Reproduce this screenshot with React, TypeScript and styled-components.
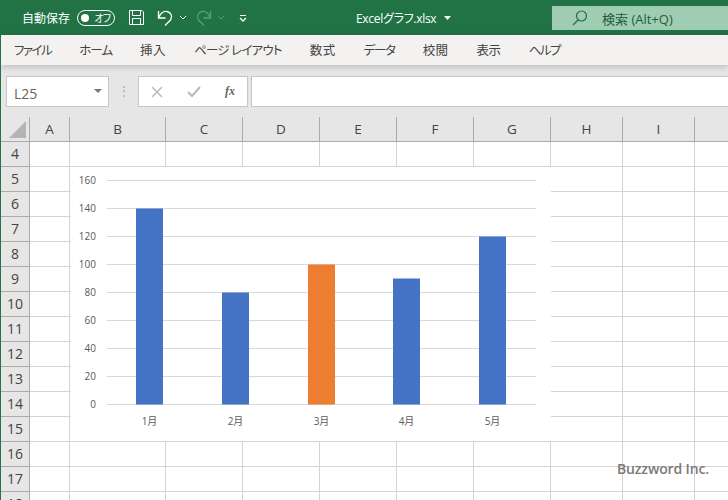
import styled, { createGlobalStyle } from 'styled-components';

const UI_FONT = `'Open Sans', 'Noto Sans CJK JP', sans-serif`;

const COLUMNS = [
  { name: 'A', width: 40 },
  { name: 'B', width: 96 },
  { name: 'C', width: 77 },
  { name: 'D', width: 77 },
  { name: 'E', width: 77 },
  { name: 'F', width: 77 },
  { name: 'G', width: 77 },
  { name: 'H', width: 72 },
  { name: 'I', width: 72 },
  { name: '', width: 40 },
];
const ROWS = [4, 5, 6, 7, 8, 9, 10, 11, 12, 13, 14, 15, 16, 17, 18];
const MENU = [
  { label: 'ファイル', track: -1.5 },
  { label: 'ホーム', track: -1 },
  { label: '挿入', track: 0.5 },
  { label: 'ページ レイアウト', track: -0.8 },
  { label: '数式', track: 0.5 },
  { label: 'データ', track: -1.3 },
  { label: '校閲', track: 0.3 },
  { label: '表示', track: -0.4 },
  { label: 'ヘルプ', track: -1.5 },
];
const SALES = [
  { label: '1月', value: 140, x: 65, color: '#4472c4' },
  { label: '2月', value: 80, x: 151, color: '#4472c4' },
  { label: '3月', value: 100, x: 237, color: '#ed7d31' },
  { label: '4月', value: 90, x: 322, color: '#4472c4' },
  { label: '5月', value: 120, x: 408, color: '#4472c4' },
];
const TICKS = [160, 140, 120, 100, 80, 60, 40, 20, 0];

const GlobalStyle = createGlobalStyle`
  html, body {
    margin: 0;
    padding: 0;
    background: #fff;
  }
`;

const Window = styled.div`
  position: relative;
  width: 728px;
  height: 500px;
  overflow: hidden;
  box-sizing: border-box;
  border-left: 1px solid #217346;
  font-family: ${UI_FONT};
  background: #fff;
`;

const TitleBar = styled.header`
  display: flex;
  align-items: center;
  height: 35px;
  margin-left: -1px;
  padding-left: 22px;
  background: #217346;
  color: #fff;
  font-size: 12px;
`;

const AutoSave = styled.span`
  width: 55px;
  font-feature-settings: 'palt';
`;

const Toggle = styled.span`
  display: flex;
  align-items: center;
  justify-content: space-between;
  box-sizing: border-box;
  width: 38px;
  height: 16px;
  margin-right: 13px;
  padding: 0 4px 0 3px;
  border: 1px solid #fff;
  border-radius: 8px;
  font-size: 10px;
  letter-spacing: -1px;
  line-height: 1;
  font-feature-settings: 'palt';
  &::before {
    content: '';
    width: 8px;
    height: 8px;
    border-radius: 50%;
    background: #fff;
  }
`;

const TitleIcon = styled.svg<{ $gap: number }>`
  display: block;
  flex: none;
  margin-right: ${({ $gap }) => $gap}px;
`;

const FileName = styled.span`
  width: 88px;
  margin-left: 109px;
  letter-spacing: -0.3px;
  white-space: nowrap;
  font-feature-settings: 'palt';
`;

const SearchBox = styled.div`
  display: flex;
  align-items: center;
  gap: 14px;
  width: 176px;
  height: 24px;
  margin: 1px 0 0 auto;
  padding-left: 20px;
  box-sizing: border-box;
  background: #9fcdb3;
  color: #1f5c3a;
  font-size: 13px;
`;

const MenuBar = styled.nav`
  position: relative;
  z-index: 1;
  display: flex;
  align-items: center;
  gap: 28px;
  height: 30px;
  box-sizing: border-box;
  padding: 0 0 1px 13px;
  background: #f3f2f1;
  box-shadow: 0 2px 6px rgb(0 0 0 / 18%);
  color: #444;
  font-size: 12.5px;
  font-feature-settings: 'palt';
`;

const MenuItem = styled.span<{ $track: number }>`
  letter-spacing: ${({ $track }) => $track}px;
  white-space: nowrap;
`;

const FormulaArea = styled.div`
  display: flex;
  gap: 3px;
  height: 52px;
  box-sizing: border-box;
  padding: 11px 0 10px 5px;
  background: #e6e6e6;
`;

const NameBox = styled.div`
  display: flex;
  align-items: center;
  justify-content: space-between;
  box-sizing: border-box;
  width: 103px;
  padding: 3px 6px 0 7px;
  border: 1px solid #c6c6c6;
  background: #fff;
  color: #666;
  font-size: 14px;
  &::after {
    content: '';
    margin-top: -5px;
    border-top: 4px solid #777;
    border-left: 4px solid transparent;
    border-right: 4px solid transparent;
  }
`;

const Grip = styled.div`
  width: 23px;
  text-align: center;
  color: #aaa;
  font-size: 12px;
  line-height: 29px;
`;

const FormulaTools = styled.div`
  display: flex;
  align-items: center;
  justify-content: space-between;
  box-sizing: border-box;
  width: 110px;
  padding: 0 12px;
  border: 1px solid #c6c6c6;
  background: #fff;
`;

const FxLabel = styled.span`
  color: #666;
  font: italic bold 12px 'Liberation Serif', serif;
`;

const FormulaInput = styled.div`
  flex: 1;
  border: 1px solid #c6c6c6;
  border-right: 0;
  background: #fff;
`;

const Sheet = styled.div`
  display: grid;
  grid-template-columns: 29px ${COLUMNS.map((c) => `${c.width}px`).join(' ')};
  grid-auto-rows: 25px;
`;

const Corner = styled.div`
  position: relative;
  height: 25px;
  box-sizing: border-box;
  border-right: 1px solid #ababab;
  border-bottom: 1px solid #ababab;
  background: #e6e6e6;
  &::after {
    content: '';
    position: absolute;
    right: 3px;
    bottom: 3px;
    border-bottom: 17px solid #b4b4b4;
    border-left: 17px solid transparent;
  }
`;

const ColumnHead = styled.div`
  display: flex;
  align-items: center;
  justify-content: center;
  box-sizing: border-box;
  border-right: 1px solid #ababab;
  border-bottom: 1px solid #ababab;
  background: #e6e6e6;
  color: #444;
  font-size: 13.5px;
`;

const RowHead = styled.div`
  display: flex;
  align-items: center;
  justify-content: center;
  box-sizing: border-box;
  padding-bottom: 2px;
  border-right: 1px solid #ababab;
  border-bottom: 1px solid #ababab;
  background: #e6e6e6;
  color: #444;
  font-size: 14px;
`;

const Cell = styled.div`
  box-sizing: border-box;
  border-right: 1px solid #d4d4d4;
  border-bottom: 1px solid #d4d4d4;
`;

const ChartFrame = styled.svg`
  position: absolute;
  left: 70px;
  top: 167px;
  display: block;
  background: #fff;
  font-family: 'Open Sans', 'Noto Sans CJK JP', sans-serif;
  font-size: 10px;
`;

const Watermark = styled.div`
  position: absolute;
  left: 616px;
  top: 459px;
  color: #7a7a7a;
  font-size: 14px;
  font-weight: 600;
  letter-spacing: -0.15px;
  white-space: nowrap;
`;

function SalesChart() {
  const yOf = (v: number) => 237.5 - v * 1.4;
  return (
    <ChartFrame width={480} height={274} viewBox="0 0 480 274">
      {TICKS.map((t) => (
        <g key={t}>
          <line x1={36} x2={465.5} y1={yOf(t)} y2={yOf(t)} stroke="#d9d9d9" />
          <text x={25} y={yOf(t) + 3.5} textAnchor="end" fill="#595959">
            {t}
          </text>
        </g>
      ))}
      {SALES.map((s) => (
        <g key={s.label}>
          <rect x={s.x} y={yOf(s.value)} width={27} height={s.value * 1.4} fill={s.color} />
          <text x={s.x + 13.5} y={258} textAnchor="middle" fill="#595959">
            {s.label}
          </text>
        </g>
      ))}
    </ChartFrame>
  );
}

export default function App() {
  return (
    <Window>
      <GlobalStyle />
      <TitleBar>
        <AutoSave>自動保存</AutoSave>
        <Toggle>オフ</Toggle>
        <TitleIcon $gap={12} width="17" height="17" viewBox="0 0 17 17" fill="none" stroke="#fff">
          <path d="M1.5 1.5h12.500l1.500 1.500v12.500h-14z" />
          <path d="M4.500 1.500v5h8v-5M4.500 15.500v-6h8v6" />
        </TitleIcon>
        <TitleIcon $gap={5} width="17" height="17" viewBox="0 0 17 17" fill="none" stroke="#fff" strokeWidth="1.300">
          <path d="M1.500 2v7h7" />
          <path d="M1.500 9C3 4.500 6.500 1.500 10 2.500c4 1 6 5 3.500 8.500L8 16.500" />
        </TitleIcon>
        <TitleIcon $gap={8} width="8" height="5" viewBox="0 0 8 5" fill="none" stroke="#fff">
          <path d="M1 1l3 3 3-3" />
        </TitleIcon>
        <TitleIcon $gap={5} width="17" height="17" viewBox="0 0 17 17" fill="none" stroke="#5e9a7a" strokeWidth="1.300">
          <path d="M15.500 2v7h-7" />
          <path d="M15.500 9C14 4.500 10.500 1.500 7 2.500c-4 1-6 5-3.500 8.500L9 16.500" />
        </TitleIcon>
        <TitleIcon $gap={14} width="8" height="5" viewBox="0 0 8 5" fill="none" stroke="#5e9a7a">
          <path d="M1 1l3 3 3-3" />
        </TitleIcon>
        <TitleIcon $gap={0} width="8" height="8" viewBox="0 0 8 8" fill="none" stroke="#fff">
          <path d="M1 1.500h6" />
          <path d="M1 4l3 3 3-3" strokeWidth="1.300" />
        </TitleIcon>
        <FileName>Excelグラフ.xlsx</FileName>
        <TitleIcon $gap={0} width="7" height="4" viewBox="0 0 7 4" fill="#fff">
          <path d="M0 0h7L3.500 4z" />
        </TitleIcon>
        <SearchBox>
          <svg width="16" height="16" viewBox="0 0 16 16" fill="none" stroke="#2c6a48" strokeWidth="1.200">
            <circle cx="9.500" cy="6" r="5" />
            <path d="M6 10l-5 5" />
          </svg>
          <span>検索 (Alt+Q)</span>
        </SearchBox>
      </TitleBar>
      <MenuBar>
        {MENU.map((m) => (
          <MenuItem key={m.label} $track={m.track}>
            {m.label}
          </MenuItem>
        ))}
      </MenuBar>
      <FormulaArea>
        <NameBox>L25</NameBox>
        <Grip>⋮</Grip>
        <FormulaTools>
          <svg width="12" height="12" viewBox="0 0 12 12" fill="none" stroke="#bbb" strokeWidth="1.500">
            <path d="M1 1l10 10M11 1L1 11" />
          </svg>
          <svg width="14" height="12" viewBox="0 0 14 12" fill="none" stroke="#bbb" strokeWidth="2">
            <path d="M1 6l4 4 8-9" />
          </svg>
          <FxLabel>fx</FxLabel>
        </FormulaTools>
        <FormulaInput />
      </FormulaArea>
      <Sheet>
        <Corner />
        {COLUMNS.map((c) => (
          <ColumnHead key={c.name || 'J'}>{c.name}</ColumnHead>
        ))}
        {ROWS.map((r) => (
          <SheetRow key={r} row={r} />
        ))}
      </Sheet>
      <SalesChart />
      <Watermark>Buzzword Inc.</Watermark>
    </Window>
  );
}

function SheetRow({ row }: { row: number }) {
  return (
    <>
      <RowHead>{row}</RowHead>
      {COLUMNS.map((c) => (
        <Cell key={c.name || 'J'} />
      ))}
    </>
  );
}
